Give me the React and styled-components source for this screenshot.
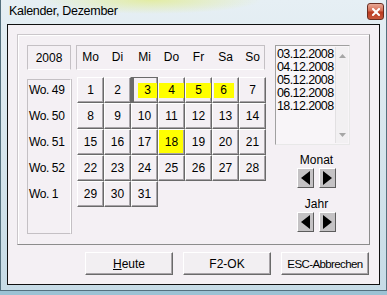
import styled, { createGlobalStyle } from "styled-components";

const GlobalStyle = createGlobalStyle`
  html, body {
    margin: 0;
    padding: 0;
    background: #9cc2d4;
    overflow: hidden;
  }
  * { box-sizing: border-box; }
`;

const Frame = styled.div`
  width: 387px;
  height: 291px;
  padding: 0 6px;
  border: 1px solid #54707e;
  border-top: none;
  background:
    radial-gradient(ellipse 110px 14px at 150px 0px, rgba(226, 236, 150, 0.85), transparent),
    linear-gradient(180deg, #e6eff4 0%, #d4e3eb 60%, #c6dbe6 100%);
  font-family: "Liberation Sans", Arial, sans-serif;
  color: #000;
`;

const TitleBar = styled.div`
  height: 24px;
  display: flex;
  align-items: center;
  justify-content: space-between;
  padding: 0 0 2px 2px;
`;

const Title = styled.span`
  font-size: 12.5px;
  letter-spacing: -0.3px;
`;

const CloseButton = styled.div`
  width: 17px;
  height: 17px;
  margin-right: -4px;
  margin-top: 1px;
  border: 1px solid #6b2e22;
  border-radius: 3px;
  background: linear-gradient(180deg, #e8a996 0%, #d3684f 48%, #b9391f 52%, #c8573b 100%);
  display: flex;
  align-items: center;
  justify-content: center;
`;

const Client = styled.div`
  height: 261px;
  border: 1px solid #101010;
  background: #f4f0f4;
  padding: 9px 9px 0 9px;
  display: flex;
  flex-direction: column;
`;

const Group = styled.div`
  height: 211px;
  border-top: 1px solid #cbc7cb;
  border-left: 1px solid #cbc7cb;
  border-right: 1px solid #8c8c8c;
  border-bottom: 1px solid #8c8c8c;
  box-shadow: inset 1px 1px 0 #ffffff;
  padding: 10px 0 0 9px;
  display: flex;
`;

const LeftCol = styled.div`
  width: 44px;
  display: flex;
  flex-direction: column;
  gap: 9px;
`;

const EtchedBox = styled.div`
  border-top: 1px solid #c4c0c4;
  border-left: 1px solid #c4c0c4;
  border-right: 1px solid #c4c0c4;
  border-bottom: 1px solid #ffffff;
  font-size: 12px;
`;

const YearBox = styled(EtchedBox)`
  height: 25px;
  display: flex;
  align-items: center;
  justify-content: center;
  padding-top: 1px;
`;

const WeekBox = styled(EtchedBox)`
  height: 155px;
  border-bottom: 1px solid #c4c0c4;
  border-right: 1px solid #ffffff;
  box-shadow: 1px 0 0 #c4c0c4;
`;

const WeekLabel = styled.div`
  height: 26px;
  line-height: 20px;
  padding-left: 1px;
  white-space: nowrap;
  letter-spacing: -0.4px;
`;

const CalCol = styled.div`
  width: 189px;
  margin-left: 6px;
  display: flex;
  flex-direction: column;
  gap: 7px;
`;

const WeekdayHeader = styled(EtchedBox)`
  height: 25px;
  width: 189px;
  display: grid;
  grid-template-columns: repeat(7, 27px);
  margin-left: -1px;
  align-items: center;
`;

const Weekday = styled.span`
  text-align: center;
  padding-bottom: 1px;
`;

const DaysGrid = styled.div`
  display: grid;
  grid-template-columns: repeat(7, 27px);
  grid-auto-rows: 26px;
`;

const DayButton = styled.div`
  display: flex;
  align-items: center;
  justify-content: center;
  font-size: 12px;
  background: ${(p) => (p.$mark === "full" ? "#ffff00" : "#f4f0f4")};
  border-top: 1px solid ${(p) => (p.$focused ? "#6a6a6a" : "#ffffff")};
  border-left: ${(p) => (p.$focused ? "3px solid #6a6a6a" : "1px solid #ffffff")};
  border-right: 1px solid #6a6a6a;
  border-bottom: 1px solid #6a6a6a;
  box-shadow: inset -1px -1px 0 #a8a4a8;
`;

const Marker = styled.span`
  display: flex;
  align-items: center;
  justify-content: center;
  background: #ffff00;
  width: ${(p) => p.$w}px;
  height: 15px;
  margin-left: ${(p) => p.$shift}px;
`;

const RightCol = styled.div`
  width: 75px;
  margin-left: 9px;
  display: flex;
  flex-direction: column;
`;

const ListBox = styled.div`
  height: 100px;
  border-top: 1px solid #a0a0a0;
  border-left: 1px solid #a0a0a0;
  border-right: 1px solid #e8e8e8;
  border-bottom: 1px solid #e8e8e8;
  background: #f8f5f8;
  display: flex;
`;

const ListItems = styled.div`
  flex: 1;
  padding: 2px 0 0 1px;
  font-size: 12.5px;
  line-height: 13px;
  letter-spacing: -0.6px;
`;

const ScrollBar = styled.div`
  width: 13px;
  margin: 1px 1px 1px 0;
  background: #f2f0f2;
  border-left: 1px solid #e2e0e2;
  display: flex;
  flex-direction: column;
  justify-content: space-between;
  align-items: center;
  padding: 7px 0 6px;
`;

const Nav = styled.div`
  display: flex;
  flex-direction: column;
  align-items: center;
  padding-left: 8px;
  margin-top: 8px;
`;

const NavLabel = styled.div`
  font-size: 12px;
  line-height: 14px;
  margin-top: ${(p) => p.$top}px;
`;

const ArrowRow = styled.div`
  display: flex;
  gap: 5px;
  margin-top: 1px;
`;

const ArrowButton = styled.div`
  width: 17px;
  height: 20px;
  background: #c4c2c4;
  border-top: 1px solid #ffffff;
  border-left: 1px solid #ffffff;
  border-right: 1px solid #5c5c5c;
  border-bottom: 1px solid #5c5c5c;
  display: flex;
  align-items: center;
  justify-content: center;
`;

const ButtonRow = styled.div`
  display: flex;
  justify-content: flex-end;
  gap: 10px;
  margin-top: 7px;
  margin-right: 1px;
`;

const PushButton = styled.div`
  width: 88px;
  height: 23px;
  display: flex;
  align-items: center;
  justify-content: center;
  white-space: nowrap;
  font-size: ${(p) => (p.$tight ? "11.5px" : "12px")};
  letter-spacing: ${(p) => (p.$tight ? "-0.6px" : "0")};
  background: #f2eff2;
  border-top: 1px solid #ffffff;
  border-left: 1px solid #ffffff;
  border-right: 1px solid #6a6a6a;
  border-bottom: 1px solid #6a6a6a;
  box-shadow: inset -1px -1px 0 #a8a4a8;
`;

const weekdays = ["Mo", "Di", "Mi", "Do", "Fr", "Sa", "So"];
const weeks = ["Wo. 49", "Wo. 50", "Wo. 51", "Wo. 52", "Wo. 1"];
const dates = ["03.12.2008", "04.12.2008", "05.12.2008", "06.12.2008", "18.12.2008"];

// inner yellow labels for the marked days
const markers = {
  3: { w: 19, shift: 4 },
  4: { w: 25, shift: 0 },
  5: { w: 25, shift: 0 },
  6: { w: 20, shift: -4 },
};

function Triangle({ dir }) {
  return (
    <svg width="9" height="14" viewBox="0 0 9 14">
      {dir === "left" ? (
        <polygon points="9,0 9,14 0,7" fill="#000" />
      ) : (
        <polygon points="0,0 0,14 9,7" fill="#000" />
      )}
    </svg>
  );
}

function ScrollArrow({ up }) {
  return (
    <svg width="7" height="4" viewBox="0 0 7 4">
      {up ? (
        <polygon points="0,4 7,4 3.5,0" fill="#a6a6a6" />
      ) : (
        <polygon points="0,0 7,0 3.5,4" fill="#a6a6a6" />
      )}
    </svg>
  );
}

const App = () => {
  const days = Array.from({ length: 31 }, (_, i) => i + 1);

  return (
    <>
      <GlobalStyle />
      <Frame>
        <TitleBar>
          <Title>Kalender, Dezember</Title>
          <CloseButton>
            <svg width="8" height="8" viewBox="0 0 8 8">
              <path d="M1 1 L7 7 M7 1 L1 7" stroke="#fff" strokeWidth="2" strokeLinecap="square" />
            </svg>
          </CloseButton>
        </TitleBar>
        <Client>
          <Group>
            <LeftCol>
              <YearBox>2008</YearBox>
              <WeekBox>
                {weeks.map((w) => (
                  <WeekLabel key={w}>{w}</WeekLabel>
                ))}
              </WeekBox>
            </LeftCol>
            <CalCol>
              <WeekdayHeader>
                {weekdays.map((d) => (
                  <Weekday key={d}>{d}</Weekday>
                ))}
              </WeekdayHeader>
              <DaysGrid>
                {days.map((d) => {
                  const m = markers[d];
                  return (
                    <DayButton key={d} $mark={d === 18 ? "full" : null} $focused={d === 3}>
                      {m ? (
                        <Marker $w={m.w} $shift={m.shift}>{d}</Marker>
                      ) : (
                        d
                      )}
                    </DayButton>
                  );
                })}
              </DaysGrid>
            </CalCol>
            <RightCol>
              <ListBox>
                <ListItems>
                  {dates.map((d) => (
                    <div key={d}>{d}</div>
                  ))}
                </ListItems>
                <ScrollBar>
                  <ScrollArrow up />
                  <ScrollArrow />
                </ScrollBar>
              </ListBox>
              <Nav>
                <NavLabel $top={0}>Monat</NavLabel>
                <ArrowRow>
                  <ArrowButton><Triangle dir="left" /></ArrowButton>
                  <ArrowButton><Triangle dir="right" /></ArrowButton>
                </ArrowRow>
                <NavLabel $top={9}>Jahr</NavLabel>
                <ArrowRow>
                  <ArrowButton><Triangle dir="left" /></ArrowButton>
                  <ArrowButton><Triangle dir="right" /></ArrowButton>
                </ArrowRow>
              </Nav>
            </RightCol>
          </Group>
          <ButtonRow>
            <PushButton><span><u>H</u>eute</span></PushButton>
            <PushButton>F2-OK</PushButton>
            <PushButton $tight>ESC-Abbrechen</PushButton>
          </ButtonRow>
        </Client>
      </Frame>
    </>
  );
};

export default App;
